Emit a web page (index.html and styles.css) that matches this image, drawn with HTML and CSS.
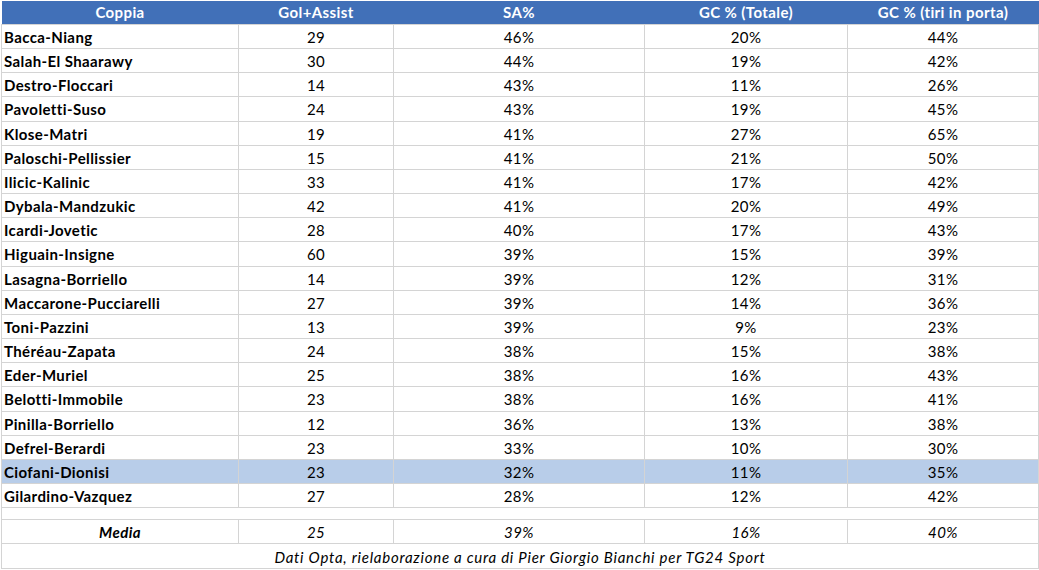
FILE: index.html
```html
<!DOCTYPE html>
<html lang="it">
<head>
<meta charset="utf-8">
<title>Coppie</title>
<link rel="stylesheet" href="styles.css">
</head>
<body>
<div class="sheet">
<table class="grid">
<colgroup>
<col class="c1"><col class="c2"><col class="c3"><col class="c4"><col class="c5">
</colgroup>
<thead>
<tr class="head"><th>Coppia</th><th>Gol+Assist</th><th>SA%</th><th>GC % (Totale)</th><th>GC % (tiri in porta)</th></tr>
</thead>
<tbody>
<tr class="row"><td class="name">Bacca-Niang</td><td>29</td><td>46%</td><td>20%</td><td>44%</td></tr>
<tr class="row"><td class="name">Salah-El Shaarawy</td><td>30</td><td>44%</td><td>19%</td><td>42%</td></tr>
<tr class="row"><td class="name">Destro-Floccari</td><td>14</td><td>43%</td><td>11%</td><td>26%</td></tr>
<tr class="row"><td class="name">Pavoletti-Suso</td><td>24</td><td>43%</td><td>19%</td><td>45%</td></tr>
<tr class="row"><td class="name">Klose-Matri</td><td>19</td><td>41%</td><td>27%</td><td>65%</td></tr>
<tr class="row"><td class="name">Paloschi-Pellissier</td><td>15</td><td>41%</td><td>21%</td><td>50%</td></tr>
<tr class="row"><td class="name">Ilicic-Kalinic</td><td>33</td><td>41%</td><td>17%</td><td>42%</td></tr>
<tr class="row"><td class="name">Dybala-Mandzukic</td><td>42</td><td>41%</td><td>20%</td><td>49%</td></tr>
<tr class="row"><td class="name">Icardi-Jovetic</td><td>28</td><td>40%</td><td>17%</td><td>43%</td></tr>
<tr class="row"><td class="name">Higuain-Insigne</td><td>60</td><td>39%</td><td>15%</td><td>39%</td></tr>
<tr class="row"><td class="name">Lasagna-Borriello</td><td>14</td><td>39%</td><td>12%</td><td>31%</td></tr>
<tr class="row"><td class="name">Maccarone-Pucciarelli</td><td>27</td><td>39%</td><td>14%</td><td>36%</td></tr>
<tr class="row"><td class="name">Toni-Pazzini</td><td>13</td><td>39%</td><td>9%</td><td>23%</td></tr>
<tr class="row"><td class="name">Théréau-Zapata</td><td>24</td><td>38%</td><td>15%</td><td>38%</td></tr>
<tr class="row"><td class="name">Eder-Muriel</td><td>25</td><td>38%</td><td>16%</td><td>43%</td></tr>
<tr class="row"><td class="name">Belotti-Immobile</td><td>23</td><td>38%</td><td>16%</td><td>41%</td></tr>
<tr class="row"><td class="name">Pinilla-Borriello</td><td>12</td><td>36%</td><td>13%</td><td>38%</td></tr>
<tr class="row"><td class="name">Defrel-Berardi</td><td>23</td><td>33%</td><td>10%</td><td>30%</td></tr>
<tr class="row hl"><td class="name">Ciofani-Dionisi</td><td>23</td><td>32%</td><td>11%</td><td>35%</td></tr>
<tr class="row"><td class="name">Gilardino-Vazquez</td><td>27</td><td>28%</td><td>12%</td><td>42%</td></tr>
<tr class="gap"><td colspan="5"></td></tr>
<tr class="avg"><td class="label">Media</td><td>25</td><td>39%</td><td>16%</td><td>40%</td></tr>
<tr class="note"><td colspan="5">Dati Opta, rielaborazione a cura di Pier Giorgio Bianchi per TG24 Sport</td></tr>
</tbody>
</table>
</div>
</body>
</html>
```
FILE: styles.css
```css
html, body {
  margin: 0;
  padding: 0;
  background: #ffffff;
}
.sheet {
  padding: 1px 0 0 1px;
}
.grid {
  table-layout: fixed;
  border-collapse: collapse;
  width: 1037px;
  font-family: Lato, "Open Sans", sans-serif;
  font-size: 15px;
  letter-spacing: 0.4px;
  color: #000000;
}
.c1 { width: 237px; }
.c2 { width: 155px; }
.c3 { width: 251px; }
.c4 { width: 203px; }
.c5 { width: 191px; }
.head th {
  background: #4170b8;
  color: #ffffff;
  font-weight: bold;
  height: 23px;
  line-height: 23px;
  padding: 0;
  text-align: center;
  vertical-align: middle;
  border: none;
}
.grid td {
  border: 1px solid #d4d4d4;
  padding: 3px 3px 2px;
  line-height: 18.15px;
  text-align: center;
  vertical-align: middle;
}
.row td.name {
  text-align: left;
  font-weight: bold;
  padding-left: 2px;
}
.hl td {
  background: #b8cde9;
}
.gap td {
  height: 11px;
  padding: 0;
  line-height: 11px;
}
.avg td {
  line-height: 18px;
  font-style: italic;
}
.avg td.label {
  font-weight: bold;
}
.note td {
  line-height: 18px;
  padding-top: 4px;
  font-style: italic;
  letter-spacing: 0.75px;
}
```
